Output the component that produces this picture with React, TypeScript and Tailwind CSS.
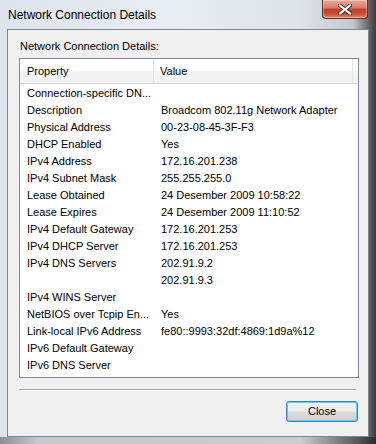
import React from "react";

const rows: [string, string][] = [
  ["Connection-specific DN...", ""],
  ["Description", "Broadcom 802.11g Network Adapter"],
  ["Physical Address", "00-23-08-45-3F-F3"],
  ["DHCP Enabled", "Yes"],
  ["IPv4 Address", "172.16.201.238"],
  ["IPv4 Subnet Mask", "255.255.255.0"],
  ["Lease Obtained", "24 Desember 2009 10:58:22"],
  ["Lease Expires", "24 Desember 2009 11:10:52"],
  ["IPv4 Default Gateway", "172.16.201.253"],
  ["IPv4 DHCP Server", "172.16.201.253"],
  ["IPv4 DNS Servers", "202.91.9.2"],
  ["", "202.91.9.3"],
  ["IPv4 WINS Server", ""],
  ["NetBIOS over Tcpip En...", "Yes"],
  ["Link-local IPv6 Address", "fe80::9993:32df:4869:1d9a%12"],
  ["IPv6 Default Gateway", ""],
  ["IPv6 DNS Server", ""],
];

export default function App() {
  return (
    <div
      className="relative w-[376px] h-[444px] overflow-hidden flex flex-col bg-[linear-gradient(to_right,#dde4ec_0%,#e8edf2_45%,#dde3e9_80%,#c2c7cc_94%,#7a7d81_97%,#3a3b3d_100%)]"
      style={{ fontFamily: '"Liberation Sans", Arial, sans-serif' }}
    >
      {/* Title bar */}
      <div className="h-[29px] flex items-start shrink-0">
        <div className="pl-[8px] pt-[8px] text-[12px] leading-[15px] text-black">
          Network Connection Details
        </div>
        <div className="flex-1" />
        <div className="mr-[8px] w-[46px] h-[19px] rounded-b-[4px] border border-t-0 border-[#6e2a20] bg-[linear-gradient(to_bottom,#e9a899_0%,#d8796a_45%,#c3412a_50%,#c94b32_75%,#e08a6a_100%)] flex items-center justify-center shadow-[inset_0_0_0_1px_rgba(255,255,255,0.35)]">
          <svg width="14" height="11" viewBox="0 0 14 11">
            <path
              d="M2 1.5 L12 9.5 M12 1.5 L2 9.5"
              stroke="#3a2a2a"
              strokeWidth="4"
              strokeLinecap="square"
            />
            <path
              d="M2 1.5 L12 9.5 M12 1.5 L2 9.5"
              stroke="#ffffff"
              strokeWidth="2.2"
              strokeLinecap="square"
            />
          </svg>
        </div>
      </div>

      {/* Client area */}
      <div className="ml-[7px] w-[362px] h-[408px] border border-[#7b8794] bg-[#f0f0f0] flex flex-col shrink-0">
        <div className="pl-[12px] pt-[10px] text-[11px] leading-[13px] text-black">
          Network Connection Details:
        </div>
        <div className="ml-[11px] mt-[5px] w-[340px] h-[320px] border border-[#828790] bg-white flex flex-col">
          <div className="h-[25px] grid grid-cols-[134px_199px_1fr] border-b border-[#d5d5d5] bg-[linear-gradient(to_bottom,#ffffff_0%,#ffffff_50%,#f4f5f7_51%,#f1f2f4_100%)] text-[11px] text-black">
            <div className="pl-[7px] flex items-center border-r border-[#e1e3e6]">Property</div>
            <div className="pl-[6px] flex items-center border-r border-[#e1e3e6]">Value</div>
            <div />
          </div>
          <div className="flex flex-col pt-[1px]">
            {rows.map(([p, v], i) => (
              <div key={i} className="h-[17px] grid grid-cols-[135px_1fr] text-[11px] leading-[17px] text-black">
                <div className="pl-[7px] whitespace-nowrap overflow-hidden">{p}</div>
                <div className="pl-[6px] whitespace-nowrap overflow-hidden">{v}</div>
              </div>
            ))}
          </div>
        </div>
        <div className="ml-[11px] mt-[11px] w-[337px] h-[2px] border-t border-[#a0a0a0] border-b border-b-white" />
        <div className="flex justify-end pr-[10px] pt-[10px]">
          <button className="w-[72px] h-[21px] rounded-[3px] border border-[#3c7fb1] shadow-[inset_0_0_0_1px_#5fd0f5] bg-[linear-gradient(to_bottom,#f2f2f2_0%,#ebebeb_48%,#dddddd_52%,#cfcfcf_100%)] text-[11px] text-black flex items-center justify-center">
            Close
          </button>
        </div>
      </div>
      <div className="flex-1 bg-[linear-gradient(to_right,#8c9096_0%,#c4c9ce_10%,#c8cdd2_80%,#55585c_95%,#2a2b2d_100%)]" />
    </div>
  );
}
